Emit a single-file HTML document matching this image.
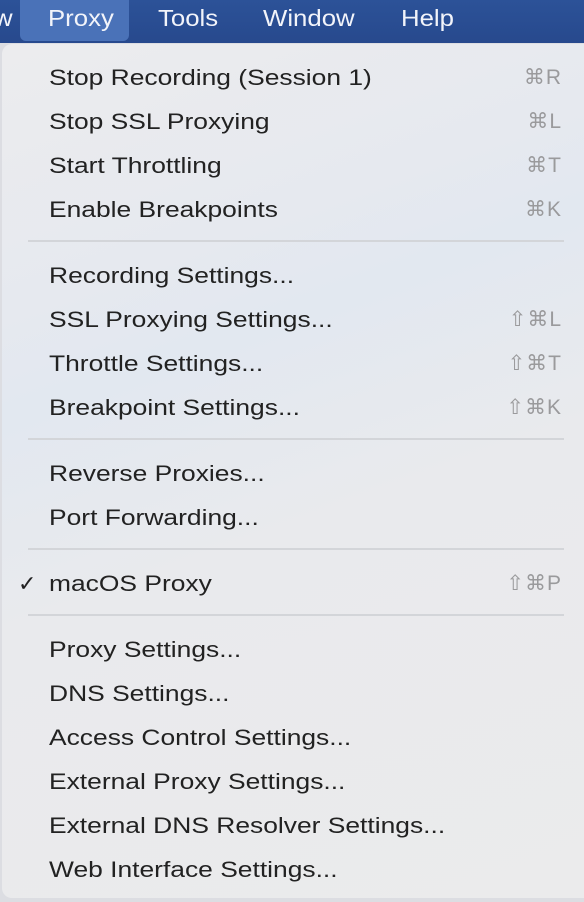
<!DOCTYPE html>
<html><head><style>
body{margin:0;width:584px;height:902px;overflow:hidden;background:#dcdde2;font-family:"Liberation Sans",sans-serif;position:relative}
.bar{position:absolute;left:0;top:0;width:584px;height:43px;background:linear-gradient(#2c5298,#27498d);color:#f2f4fa;font-size:23px}
.bar span{position:absolute;top:5px;transform:scaleX(1.12);transform-origin:left}
.hl{position:absolute;left:20px;top:0;width:109px;height:41px;background:#4a72b8;border-radius:0 0 6px 6px}
.menu{position:absolute;left:2px;top:44px;width:600px;height:854px;border-radius:10px 0 0 10px;background:linear-gradient(160deg,#ececee 0%,#e6e9ef 25%,#e2e8f0 35%,#e9eaed 55%,#ebebec 100%);}
.it{position:absolute;left:49px;font-size:22px;color:#222;line-height:26px;transform:scaleX(1.2);transform-origin:left;white-space:nowrap}
.sc{position:absolute;right:22px;font-size:21px;color:#9a9a9c;line-height:26px;letter-spacing:1px}
.sep{position:absolute;left:28px;width:536px;height:2px;background:#d3d5d9}
.chk{position:absolute;left:18px;font-size:22px;color:#222;line-height:26px}
</style></head><body>
<div class="bar"><span style="left:-6px">w</span><div class="hl"></div><span style="left:48px">Proxy</span><span style="left:158px">Tools</span><span style="left:263px">Window</span><span style="left:401px">Help</span></div>
<div class="menu"></div>
<div class="it" style="top:65px">Stop Recording (Session 1)</div><div class="sc" style="top:65px">⌘R</div>
<div class="it" style="top:109px">Stop SSL Proxying</div><div class="sc" style="top:109px">⌘L</div>
<div class="it" style="top:153px">Start Throttling</div><div class="sc" style="top:153px">⌘T</div>
<div class="it" style="top:197px">Enable Breakpoints</div><div class="sc" style="top:197px">⌘K</div>
<div class="sep" style="top:240px"></div>
<div class="it" style="top:263px">Recording Settings...</div>
<div class="it" style="top:307px">SSL Proxying Settings...</div><div class="sc" style="top:307px">⇧⌘L</div>
<div class="it" style="top:351px">Throttle Settings...</div><div class="sc" style="top:351px">⇧⌘T</div>
<div class="it" style="top:395px">Breakpoint Settings...</div><div class="sc" style="top:395px">⇧⌘K</div>
<div class="sep" style="top:438px"></div>
<div class="it" style="top:461px">Reverse Proxies...</div>
<div class="it" style="top:505px">Port Forwarding...</div>
<div class="sep" style="top:548px"></div>
<div class="chk" style="top:571px">✓</div>
<div class="it" style="top:571px">macOS Proxy</div><div class="sc" style="top:571px">⇧⌘P</div>
<div class="sep" style="top:614px"></div>
<div class="it" style="top:637px">Proxy Settings...</div>
<div class="it" style="top:681px">DNS Settings...</div>
<div class="it" style="top:725px">Access Control Settings...</div>
<div class="it" style="top:769px">External Proxy Settings...</div>
<div class="it" style="top:813px">External DNS Resolver Settings...</div>
<div class="it" style="top:857px">Web Interface Settings...</div>
</body></html>
